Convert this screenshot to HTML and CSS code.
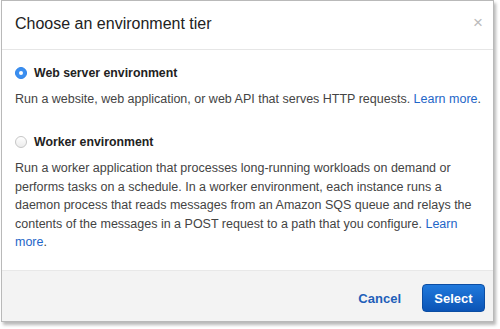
FILE: index.html
```html
<!DOCTYPE html>
<html lang="en">
<head>
  <meta charset="UTF-8" />
  <title>Choose an environment tier</title>
  <link rel="stylesheet" href="styles.css">
</head>
<body>
  <div class="modal">
    <div class="modal-header">
      <h2>Choose an environment tier</h2>
      <span class="close">&times;</span>
    </div>

    <div class="modal-body">
      <div class="option">
        <div class="option-label">
          <span class="radio checked"></span>
          <span>Web server environment</span>
        </div>
        <p>Run a website, web application, or web API that serves HTTP requests. <a href="#">Learn more</a>.</p>
      </div>

      <div class="option">
        <div class="option-label">
          <span class="radio"></span>
          <span>Worker environment</span>
        </div>
        <p>Run a worker application that processes long-running workloads on demand or performs tasks on a schedule. In a worker environment, each instance runs a daemon process that reads messages from an Amazon SQS queue and relays the contents of the messages in a POST request to a path that you configure. <a href="#">Learn more</a>.</p>
      </div>
    </div>

    <div class="modal-footer">
      <a href="#" class="btn-cancel">Cancel</a>
      <button class="btn-select">Select</button>
    </div>
  </div>
</body>
</html>
```

FILE: styles.css
```css
* {
  box-sizing: border-box;
  margin: 0;
  padding: 0;
}

body {
  font-family: "Liberation Sans", Arial, sans-serif;
  background: #fff;
  color: #444;
  width: 500px;
  height: 329px;
}

.modal {
  margin-left: 1px;
  width: 493px;
  height: 322px;
  border: 1px solid #b9b9b9;
  background: #fff;
  box-shadow: 2px 3px 3px rgba(0, 0, 0, 0.28);
  display: flex;
  flex-direction: column;
}

.modal-header {
  height: 49px;
  border-bottom: 1px solid #e6e6e6;
  display: flex;
  align-items: center;
  justify-content: space-between;
  padding: 0 10px 2px 13px;
}

.modal-header h2 {
  font-size: 16px;
  font-weight: normal;
  color: #222;
}

.close {
  color: #bbb;
  font-size: 17px;
  line-height: 1;
  margin-top: -4px;
}

.modal-body {
  flex: 1;
  padding: 14px 6px 0 13px;
}

.option + .option {
  margin-top: 24.5px;
}

.option-label {
  display: flex;
  align-items: center;
  gap: 7px;
  height: 18px;
  font-size: 12.3px;
  font-weight: bold;
  color: #222;
}

.radio {
  width: 12px;
  height: 12px;
  border-radius: 50%;
  border: 1px solid #c6c6c6;
  background: linear-gradient(#fff, #ececec);
  display: flex;
  align-items: center;
  justify-content: center;
}

.radio.checked {
  border-color: #2f84ea;
  background: #3b8ff0;
}

.radio.checked::after {
  content: "";
  width: 4px;
  height: 4px;
  border-radius: 50%;
  background: #fff;
}

.option p {
  margin-top: 8px;
  font-size: 12.5px;
  line-height: 18.5px;
  color: #444;
}

.option a {
  color: #1f66c8;
  text-decoration: none;
}

.modal-footer {
  height: 51px;
  border-top: 1px solid #e8e8e8;
  background: #f3f3f3;
  display: flex;
  align-items: center;
  justify-content: flex-end;
  padding: 4px 8px 0 0;
}

.btn-cancel {
  color: #1e5fb9;
  font-size: 13px;
  font-weight: bold;
  text-decoration: none;
  margin-right: 21px;
}

.btn-select {
  width: 63px;
  height: 28px;
  border: 1px solid #0b4da3;
  border-radius: 4px;
  background: linear-gradient(#2079dc, #0b54b6);
  color: #fff;
  font-family: inherit;
  font-size: 13px;
  font-weight: bold;
}
```
